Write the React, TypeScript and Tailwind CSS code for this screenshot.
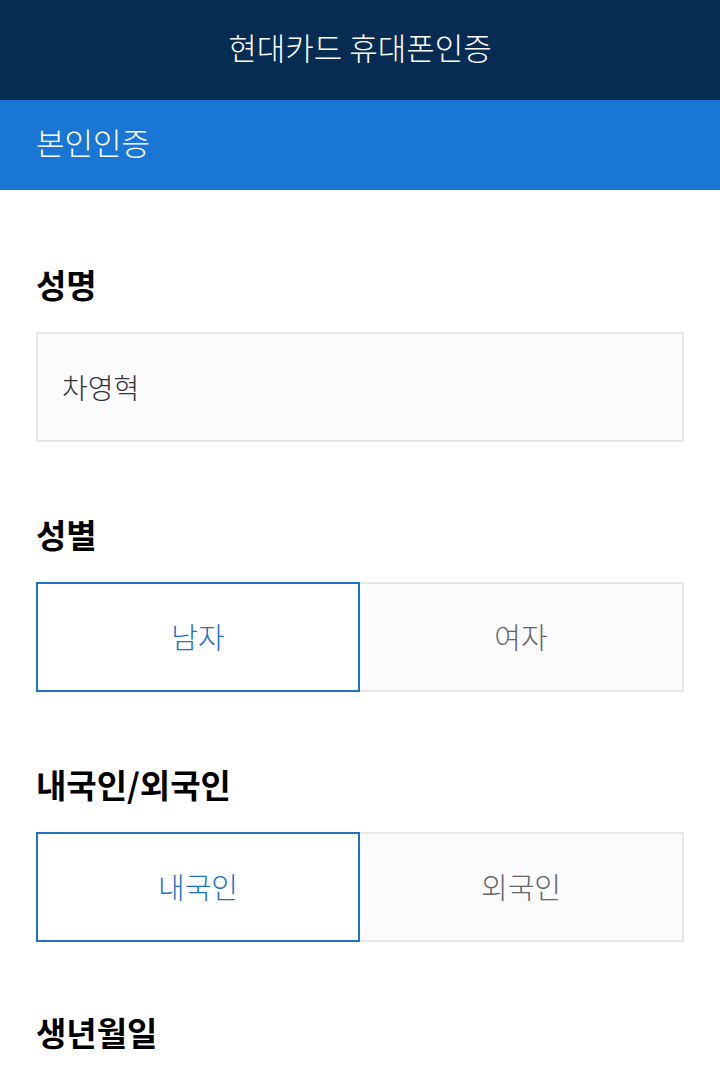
import React from "react";

const font = { fontFamily: '"Noto Sans CJK KR", "Noto Sans", sans-serif' };

const Label = ({ children }: { children: React.ReactNode }) => (
  <h2 className="h-10 text-[33px] leading-9 font-bold text-black">{children}</h2>
);

const Toggle = ({ left, right }: { left: string; right: string }) => (
  <div className="mt-[26px] grid grid-cols-2 h-[110px]">
    <button className="flex items-center justify-center border-2 border-[#2272c3] bg-white text-[29px] font-light text-[#1f72c1]">
      {left}
    </button>
    <button className="flex items-center justify-center border-2 border-l-0 border-[#e7e7e9] bg-[#fbfafc] text-[29px] font-light text-[#666666]">
      {right}
    </button>
  </div>
);

const App = () => {
  return (
    <div className="min-h-[1076px] bg-white" style={font}>
      <header className="flex h-[100px] items-center justify-center bg-[#072c53] pb-[6px]">
        <h1 className="text-[31px] font-light text-white">현대카드 휴대폰인증</h1>
      </header>
      <div className="flex h-[90px] items-center bg-[#1a76d4] px-9 pb-[6px]">
        <span className="text-[31px] font-light text-white">본인인증</span>
      </div>
      <main className="px-9 pt-[76px]">
        <section>
          <Label>성명</Label>
          <div className="mt-[26px] flex h-[110px] items-center border-2 border-[#e7e7e9] bg-[#fbfafc] px-6 text-[28px] font-light text-[#333333]">
            차영혁
          </div>
        </section>
        <section className="mt-[74px]">
          <Label>성별</Label>
          <Toggle left="남자" right="여자" />
        </section>
        <section className="mt-[74px]">
          <Label>내국인/외국인</Label>
          <Toggle left="내국인" right="외국인" />
        </section>
        <section className="mt-[72px]">
          <Label>생년월일</Label>
        </section>
      </main>
    </div>
  );
};

export default App;
